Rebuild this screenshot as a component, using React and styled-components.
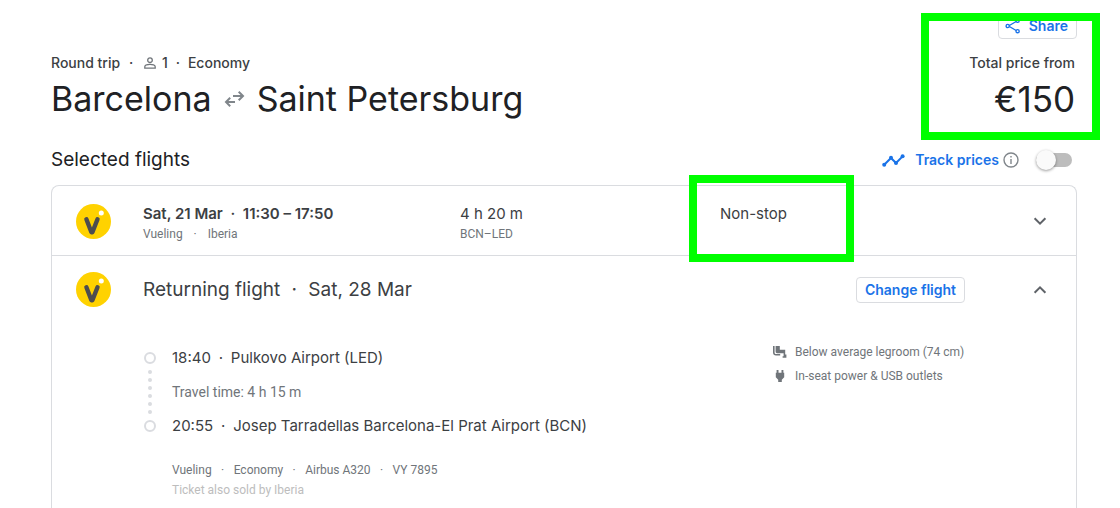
import React, { useState } from 'react'
import styled, { createGlobalStyle } from 'styled-components'

const GlobalStyle = createGlobalStyle`
* {
  box-sizing: border-box;
}

body {
  margin: 0;
  background: #fff;
  color: #3c4043;
  font-family: Inter, 'Open Sans', sans-serif;
  font-size: 15px;
  line-height: 20px;
}

h1, h2, h3, p, ul {
  margin: 0;
  padding: 0;
  font-weight: 400;
}

button {
  font-family: inherit;
  cursor: pointer;
}
`

const Page = styled.main`
display: flex;
flex-direction: column;
height: 100vh;
padding: 13px 43px 0 51px;
overflow: hidden;
`

const Header = styled.header`
display: flex;
justify-content: space-between;
align-items: flex-end;
`

const Trip = styled.div`
display: flex;
flex-direction: column;
gap: 4px;
`

const TripMeta = styled.div`
display: flex;
align-items: center;
height: 20px;
font-size: 14px;
font-weight: 500;
`

const Passengers = styled.span`
display: inline-flex;
align-items: center;
gap: 6px;
padding-left: 2px;
`

const Route = styled.h1`
display: flex;
align-items: center;
gap: 12px;
color: #202124;
font-size: 34px;
line-height: 44px;
`

const Price = styled.div`
position: relative;
display: flex;
flex-direction: column;
align-items: flex-end;
gap: 4px;
`

const PriceLabel = styled.p`
padding-right: 2px;
font-size: 14px;
font-weight: 500;
`

const PriceValue = styled.p`
padding-right: 2px;
color: #202124;
font-size: 35px;
line-height: 44px;
`

const OutlineButton = styled.button`
display: inline-flex;
align-items: center;
justify-content: center;
gap: 8px;
height: 26px;
padding: 0 8px;
border: 1px solid #dadce0;
border-radius: 4px;
background: #fff;
color: #1a73e8;
font-size: 14px;
font-weight: 600;
line-height: 20px;
white-space: nowrap;
`

const ShareButton = styled(OutlineButton)`
margin-bottom: 10px;
padding: 0 8px 0 6px;
`

// green marker frame drawn over the content
const Marker = styled.div`
position: absolute;
top: ${props => props.$top}px;
right: ${props => props.$right};
bottom: ${props => props.$bottom}px;
left: ${props => props.$left}px;
width: ${props => props.$width || 'auto'};
border: 8px solid #00ff00;
pointer-events: none;
z-index: 1;
`

const SectionBar = styled.div`
display: flex;
align-items: center;
justify-content: space-between;
margin: 19px 0 5px;
height: 40px;
`

const SectionTitle = styled.h2`
color: #202124;
font-size: 19px;
line-height: 28px;
`

const Track = styled.div`
display: flex;
align-items: center;
padding-right: 5px;
color: #1a73e8;
font-size: 14px;
font-weight: 600;

label {
  margin: 0 4px 0 10px;
}
`

const Toggle = styled.input`
appearance: none;
position: relative;
width: 36px;
height: 14px;
margin: 0 0 0 17px;
border-radius: 7px;
background: ${props => props.checked ? '#8ab4f8' : '#bdbdbd'};
cursor: pointer;

&::before {
  content: '';
  position: absolute;
  top: -3px;
  left: ${props => props.checked ? '16px' : '0'};
  width: 20px;
  height: 20px;
  border-radius: 50%;
  background: ${props => props.checked ? '#1a73e8' : '#fafafa'};
  box-shadow: 0 1px 3px rgba(0, 0, 0, 0.4);
}
`

const Card = styled.section`
flex: 1;
border: 1px solid #dadce0;
border-bottom: 0;
border-radius: 8px 8px 0 0;
`

const FlightRow = styled.article`
display: grid;
grid-template-columns: 67px 317fr 260fr 308fr 24px;
align-items: center;
height: 70px;
padding: 0 24px;
border-bottom: 1px solid #dadce0;
`

const Cell = styled.div`
position: relative;
display: flex;
flex-direction: column;
justify-content: center;
height: 70px;
padding: ${props => props.$single ? '0 0 14px' : '6px 0 0'};
`

const Main = styled.p`
display: flex;
font-weight: ${props => props.$strong ? 600 : 400};
white-space: nowrap;
`

const Small = styled.p`
display: flex;
color: ${props => props.$faint ? '#bdbdbd' : '#70757a'};
font-family: Roboto, sans-serif;
font-size: ${props => props.$large ? '14px' : '12px'};
line-height: 20px;
white-space: nowrap;
`

const Dot = styled.span`
display: inline-flex;
justify-content: center;
width: ${props => props.$width || 20}px;

&::before {
  content: '·';
}
`

const IconButton = styled.button`
display: flex;
align-items: center;
justify-content: center;
width: 24px;
height: 24px;
padding: 0;
border: 0;
background: none;
color: #5f6368;
`

const ReturnRow = styled.div`
display: flex;
align-items: center;
height: 67px;
padding: 0 24px;
`

const LogoBox = styled.div`
display: flex;
flex: none;
width: 67px;
`

const ReturnTitle = styled.h3`
display: flex;
flex: 1;
font-size: 19px;
line-height: 28px;
white-space: nowrap;
`

const ReturnActions = styled.div`
display: flex;
align-items: center;
gap: 63px;
`

const Details = styled.div`
display: flex;
justify-content: space-between;
padding: 25px 24px 0 91px;
`

const Leg = styled.div`
display: grid;
grid-template-columns: 14px 1fr;
column-gap: 15px;
`

const Timeline = styled.div`
display: flex;
flex-direction: column;
align-items: center;
justify-content: space-between;
height: 88px;
padding: 4px 0;
`

const Stop = styled.span`
width: 12px;
height: 12px;
border: 2px solid #dadce0;
border-radius: 50%;
`

const Ticks = styled.span`
display: flex;
flex-direction: column;
gap: 4px;
`

const Tick = styled.span`
width: 4px;
height: 4px;
border-radius: 50%;
background: #dadce0;
`

const Stops = styled.div`
display: flex;
flex-direction: column;
justify-content: space-between;
height: 88px;
`

const LegNotes = styled.div`
grid-column: 2;
margin-top: 24px;
`

const Amenities = styled.ul`
display: flex;
flex: none;
flex-direction: column;
gap: 4px;
width: 279px;
margin-top: -6px;
list-style: none;

li {
  display: flex;
  align-items: center;
  gap: 8px;
  color: #70757a;
}
`

const PersonIcon = () => (
    <svg width="12" height="12" viewBox="0 0 12 12" fill="none" stroke="#70757a" strokeWidth="1.3">
        <circle cx="6" cy="3.2" r="2.3" />
        <path d="M.8 11.1V9.7C.8 8 3.6 7.3 6 7.3s5.2.7 5.2 2.4v1.4z" />
    </svg>
)

const SwapIcon = () => (
    <svg width="21" height="18" viewBox="0 0 21 18" fill="none" stroke="#80868b" strokeWidth="2">
        <path d="M9 6h10M14.7 1.8 19 6l-4.3 4.2M11 12H2M6.2 7.8 2 12l4.2 4.2" />
    </svg>
)

const ShareIcon = () => (
    <svg width="16" height="16" viewBox="0 0 16 16" fill="none" stroke="#1a73e8" strokeWidth="1.4">
        <path d="M3.500 8l8.500-5M3.500 8l8.500 5" />
        <circle cx="12.6" cy="2.8" r="1.6" fill="#fff" />
        <circle cx="2.7" cy="8" r="1.6" fill="#fff" />
        <circle cx="12.6" cy="13.2" r="1.6" fill="#fff" />
    </svg>
)

const TrendIcon = () => (
    <svg width="23" height="13" viewBox="0 0 23 13" fill="#1a73e8">
        <path d="M2.2 10.8 9 4l5 5 6.6-6.6" fill="none" stroke="#1a73e8" strokeWidth="2" />
        <circle cx="2.2" cy="10.8" r="2" />
        <circle cx="9" cy="3.8" r="2" />
        <circle cx="14" cy="9" r="2" />
        <circle cx="20.6" cy="2.3" r="2" />
    </svg>
)

const InfoIcon = () => (
    <svg width="16" height="16" viewBox="0 0 16 16" fill="none" stroke="#80868b" strokeWidth="1.4">
        <circle cx="8" cy="8" r="7" />
        <path d="M8 7v5M8 4v1.6" />
    </svg>
)

const ChevronIcon = ({ up }) => (
    <svg width="14" height="10" viewBox="0 0 14 10" fill="none" stroke="currentColor" strokeWidth="2">
        <path d={up ? 'M1.6 7.8 7 2.4l5.4 5.4' : 'M1.6 2.2 7 7.6l5.4-5.4'} />
    </svg>
)

const AirlineLogo = () => (
    <svg width="35" height="35" viewBox="0 0 35 35" role="img" aria-label="Vueling">
        <circle cx="17.5" cy="17.5" r="17.5" fill="#ffd200" />
        <path d="M10.4 15.200l5 13h1L21.500 15.200" fill="none" stroke="#4d4d4f" strokeWidth="4.400" strokeLinecap="round" strokeLinejoin="round" />
        <circle cx="25.3" cy="8.9" r="2.5" fill="#fff" />
    </svg>
)

const LegroomIcon = () => (
    <svg width="14" height="14" viewBox="0 0 14 14" fill="#70757a">
        <path d="M0 1h1.6v6.4c0 1 .6 1.6 1.6 1.6h4v1.4H3C1.2 10.4 0 9.2 0 7.4z" />
        <path d="M2.6 1h4.2v3.800h5.400v4.800h1.200v3.200H9.600v-1.500h1V8.200H4.200c-1 0-1.600-.6-1.600-1.600z" />
    </svg>
)

const PlugIcon = () => (
    <svg width="14" height="14" viewBox="0 0 14 14" fill="#70757a">
        <path d="M3.6 1h1.9v2.8h3V1h1.9v2.8h.8v4.4l-2.400 2.600V13H5.200v-2.200L2.800 8.200V3.800h.8z" />
    </svg>
)

const App = () => {

    const [tracking, setTracking] = useState(false)

    return (
        <>
            <GlobalStyle />
            <Page>
                <Header>
                    <Trip>
                        <TripMeta>
                            Round trip <Dot $width={22} />
                            <Passengers><PersonIcon /> 1</Passengers>
                            <Dot /> Economy
                        </TripMeta>
                        <Route>
                            <span>Barcelona</span>
                            <SwapIcon />
                            <span>Saint Petersburg</span>
                        </Route>
                    </Trip>
                    <Price>
                        <ShareButton><ShareIcon /> Share</ShareButton>
                        <PriceLabel>Total price from</PriceLabel>
                        <PriceValue>€150</PriceValue>
                        <Marker $top={0} $right="-23px" $bottom={-19} $width="179px" />
                    </Price>
                </Header>

                <SectionBar>
                    <SectionTitle>Selected flights</SectionTitle>
                    <Track>
                        <TrendIcon />
                        <label htmlFor="track">Track prices</label>
                        <InfoIcon />
                        <Toggle id="track" type="checkbox" checked={tracking} onChange={() => setTracking(!tracking)} />
                    </Track>
                </SectionBar>

                <Card>
                    <FlightRow>
                        <AirlineLogo />
                        <Cell>
                            <Main $strong>Sat, 21 Mar <Dot /> 11:30 – 17:50</Main>
                            <Small>Vueling <Dot $width={25} /> Iberia</Small>
                        </Cell>
                        <Cell>
                            <Main>4 h 20 m</Main>
                            <Small>BCN–LED</Small>
                        </Cell>
                        <Cell $single>
                            <Main>Non-stop</Main>
                            <Marker $top={-11} $left={-31} $bottom={-6} $width="165px" />
                        </Cell>
                        <IconButton aria-label="Show flight details"><ChevronIcon /></IconButton>
                    </FlightRow>

                    <ReturnRow>
                        <LogoBox><AirlineLogo /></LogoBox>
                        <ReturnTitle>Returning flight <Dot $width={28} /> Sat, 28 Mar</ReturnTitle>
                        <ReturnActions>
                            <OutlineButton>Change flight</OutlineButton>
                            <IconButton aria-label="Hide flight details"><ChevronIcon up /></IconButton>
                        </ReturnActions>
                    </ReturnRow>

                    <Details>
                        <Leg>
                            <Timeline>
                                <Stop />
                                <Ticks>
                                    <Tick />
                                    <Tick />
                                    <Tick />
                                    <Tick />
                                    <Tick />
                                    <Tick />
                                </Ticks>
                                <Stop />
                            </Timeline>
                            <Stops>
                                <Main>18:40 <Dot /> Pulkovo Airport (LED)</Main>
                                <Small $large>Travel time: 4 h 15 m</Small>
                                <Main>20:55 <Dot /> Josep Tarradellas Barcelona-El Prat Airport (BCN)</Main>
                            </Stops>
                            <LegNotes>
                                <Small>Vueling <Dot $width={22} /> Economy <Dot $width={22} /> Airbus A320 <Dot $width={22} /> VY 7895</Small>
                                <Small $faint>Ticket also sold by Iberia</Small>
                            </LegNotes>
                        </Leg>
                        <Amenities>
                            <li><LegroomIcon /><Small>Below average legroom (74 cm)</Small></li>
                            <li><PlugIcon /><Small>In-seat power & USB outlets</Small></li>
                        </Amenities>
                    </Details>
                </Card>
            </Page>
        </>
    )
}

export default App
